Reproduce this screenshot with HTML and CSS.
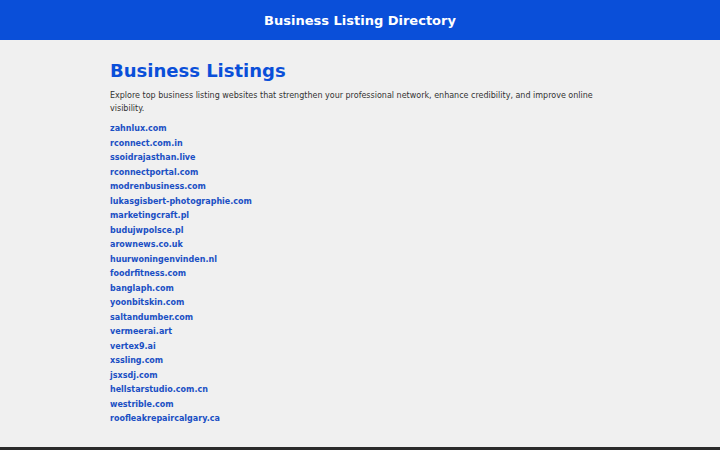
FILE: index.html
```html
<!DOCTYPE html>
<html>
<head>
    <meta charset="utf-8">
    <meta name="viewport" content="width=device-width, initial-scale=1">
    <title>Business Listing Directory</title>
    <link rel="stylesheet" href="styles.css">
</head>

<body>
    <header class="top-bar">
        <h2>Business Listing Directory</h2>
    </header>

    <main class="container">
        <h1>Business Listings</h1>
        <p class="intro">Explore top business listing websites that strengthen your professional network, enhance credibility, and improve online visibility.</p>

        <ul class="links">
            <li><a href="#">zahnlux.com</a></li>
            <li><a href="#">rconnect.com.in</a></li>
            <li><a href="#">ssoidrajasthan.live</a></li>
            <li><a href="#">rconnectportal.com</a></li>
            <li><a href="#">modrenbusiness.com</a></li>
            <li><a href="#">lukasgisbert-photographie.com</a></li>
            <li><a href="#">marketingcraft.pl</a></li>
            <li><a href="#">budujwpolsce.pl</a></li>
            <li><a href="#">arownews.co.uk</a></li>
            <li><a href="#">huurwoningenvinden.nl</a></li>
            <li><a href="#">foodrfitness.com</a></li>
            <li><a href="#">banglaph.com</a></li>
            <li><a href="#">yoonbitskin.com</a></li>
            <li><a href="#">saltandumber.com</a></li>
            <li><a href="#">vermeerai.art</a></li>
            <li><a href="#">vertex9.ai</a></li>
            <li><a href="#">xssling.com</a></li>
            <li><a href="#">jsxsdj.com</a></li>
            <li><a href="#">hellstarstudio.com.cn</a></li>
            <li><a href="#">westrible.com</a></li>
            <li><a href="#">roofleakrepaircalgary.ca</a></li>
        </ul>
    </main>

    <footer class="bottom-bar"></footer>
</body>
</html>
```
FILE: styles.css
```css
body, html {
    margin: 0;
    padding: 0;
    background-color: #f0f0f0;
    font-family: "DejaVu Sans", sans-serif;
    color: #333;}

.top-bar {
    background-color: #0a4fd9;
    height: 40px;
    display: flex;
    align-items: center;
    justify-content: center;}

.top-bar h2 {
    margin: 0;
    color: #fff;
    font-size: 13px;
    font-weight: bold;}

.container {
    max-width: 500px;
    margin: 0 auto;
    padding: 20px 0 20.5px;}

.container h1 {
    margin: 0 0 7px;
    color: #0a4fd9;
    font-size: 18px;
    line-height: 22px;}

.intro {
    margin: 0 0 7px;
    font-size: 8px;
    line-height: 13px;}

.links {
    list-style: none;
    margin: 0;
    padding: 0;
    font-size: 8px;}

.links li {
    line-height: 14.5px;}

.links a {
    color: #1a4fc4;
    font-weight: bold;
    text-decoration: none;}

.bottom-bar {
    background-color: #2b2b2b;
    height: 30px;}
```
